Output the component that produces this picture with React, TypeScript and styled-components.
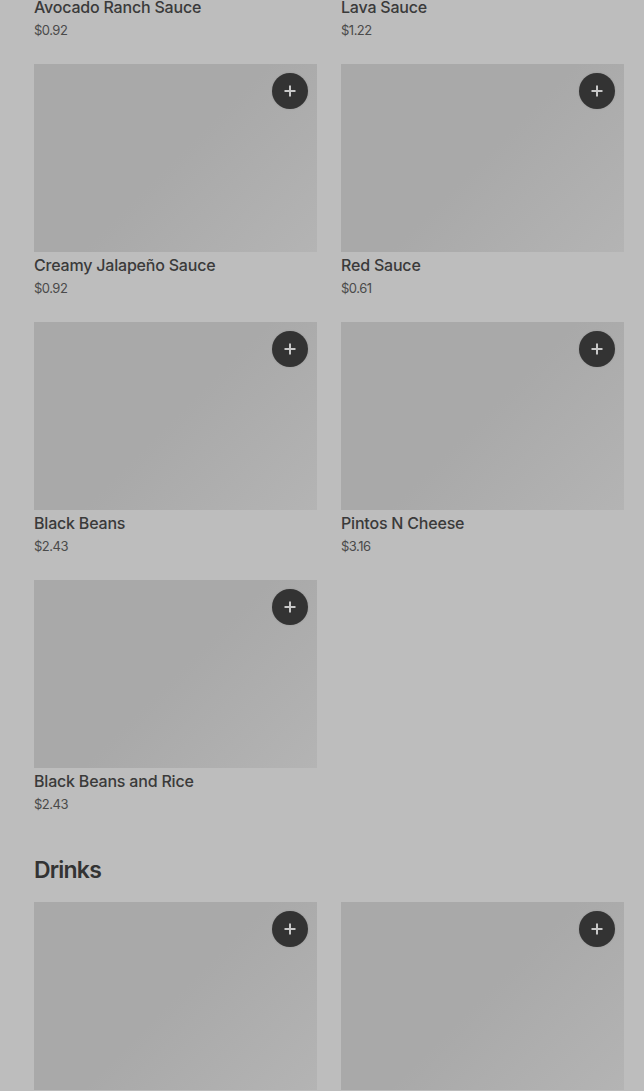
import styled, { createGlobalStyle } from "styled-components";

type Item = { name: string; price: string };

const sections: { title?: string; items: Item[] }[] = [
  {
    items: [
      { name: "Avocado Ranch Sauce", price: "$0.92" },
      { name: "Lava Sauce", price: "$1.22" },
      { name: "Creamy Jalapeño Sauce", price: "$0.92" },
      { name: "Red Sauce", price: "$0.61" },
      { name: "Black Beans", price: "$2.43" },
      { name: "Pintos N Cheese", price: "$3.16" },
      { name: "Black Beans and Rice", price: "$2.43" },
    ],
  },
  {
    title: "Drinks",
    items: [
      { name: "Fountain Drink", price: "$2.19" },
      { name: "Bottled Water", price: "$2.49" },
    ],
  },
];

export default function App() {
  return (
    <>
      <GlobalStyle />
      <Page>
        {sections.map((section, i) => (
          <Section key={i}>
            {section.title && <SectionTitle>{section.title}</SectionTitle>}
            <Grid>
              {section.items.map((item) => (
                <Card key={item.name}>
                  <Thumb>
                    <AddButton aria-label="Add">
                      <svg width="14" height="14" viewBox="0 0 14 14">
                        <path d="M7 1.5v11M1.5 7h11" stroke="#c8c8c8" strokeWidth="2" />
                      </svg>
                    </AddButton>
                  </Thumb>
                  <Name>{item.name}</Name>
                  <Price>{item.price}</Price>
                </Card>
              ))}
            </Grid>
          </Section>
        ))}
      </Page>
    </>
  );
}

const GlobalStyle = createGlobalStyle`
  html, body {
    margin: 0;
    padding: 0;
    background: #bdbdbd;
    overflow: hidden;
  }
  body {
    font-family: Inter, "Noto Sans", sans-serif;
  }
`;

const Page = styled.div`
  padding: 0 20px 0 34px;
  margin-top: -194px;
  display: flex;
  flex-direction: column;
  gap: 40px;
`;

const Section = styled.section`
  display: flex;
  flex-direction: column;
  gap: 16px;
`;

const SectionTitle = styled.h2`
  margin: 0;
  font-size: 23px;
  line-height: 32px;
  font-weight: 600;
  letter-spacing: -0.8px;
  color: #333333;
`;

const Grid = styled.div`
  display: grid;
  grid-template-columns: 1fr 1fr;
  column-gap: 24px;
  row-gap: 24px;
`;

const Card = styled.div`
  display: flex;
  flex-direction: column;
`;

const Thumb = styled.div`
  position: relative;
  height: 188px;
  background: linear-gradient(135deg, #a9a9a9 0%, #a9a9a9 50%, #b4b4b4 100%);
`;

const AddButton = styled.button`
  position: absolute;
  top: 9px;
  right: 9px;
  width: 36px;
  height: 36px;
  border-radius: 50%;
  border: none;
  padding: 0;
  background: #333333;
  display: flex;
  align-items: center;
  justify-content: center;
  box-shadow: 0 0 2px rgba(0, 0, 0, 0.15);
`;

const Name = styled.div`
  margin-top: 3px;
  font-size: 16px;
  line-height: 20px;
  font-weight: 500;
  letter-spacing: -0.2px;
  color: #3a3a3a;
`;

const Price = styled.div`
  margin-top: 3px;
  font-size: 13px;
  line-height: 20px;
  font-weight: 400;
  color: #4a4a4a;
  letter-spacing: -0.5px;
`;
